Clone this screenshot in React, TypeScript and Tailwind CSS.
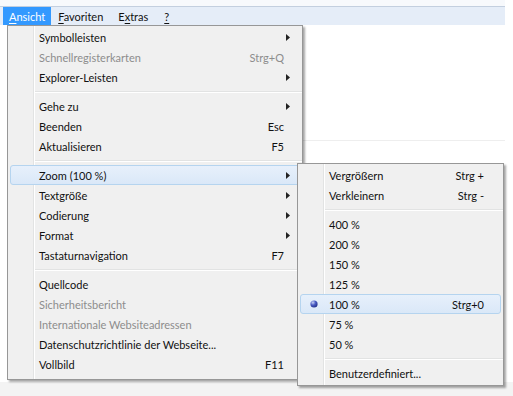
import React from "react";

type Item =
  | { sep: true }
  | {
      sep?: false;
      label: React.ReactNode;
      shortcut?: string;
      arrow?: boolean;
      disabled?: boolean;
      hl?: boolean;
      radio?: boolean;
    };

const mainItems: Item[] = [
  { label: "Symbolleisten", arrow: true },
  { label: "Schnellregisterkarten", shortcut: "Strg+Q", disabled: true },
  { label: "Explorer-Leisten", arrow: true },
  { sep: true },
  { label: "Gehe zu", arrow: true },
  { label: "Beenden", shortcut: "Esc" },
  { label: "Aktualisieren", shortcut: "F5" },
  { sep: true },
  { label: "Zoom (100 %)", arrow: true, hl: true },
  { label: "Textgröße", arrow: true },
  { label: "Codierung", arrow: true },
  { label: "Format", arrow: true },
  { label: "Tastaturnavigation", shortcut: "F7" },
  { sep: true },
  { label: "Quellcode" },
  { label: "Sicherheitsbericht", disabled: true },
  { label: "Internationale Websiteadressen", disabled: true },
  { label: "Datenschutzrichtlinie der Webseite..." },
  { label: "Vollbild", shortcut: "F11" },
];

const subItems: Item[] = [
  { label: "Vergrößern", shortcut: "Strg +" },
  { label: "Verkleinern", shortcut: "Strg -" },
  { sep: true },
  { label: "400 %" },
  { label: "200 %" },
  { label: "150 %" },
  { label: "125 %" },
  { label: "100 %", shortcut: "Strg+0", radio: true, hl: true },
  { label: "75 %" },
  { label: "50 %" },
  { sep: true },
  { label: "Benutzerdefiniert..." },
];

function Arrow() {
  return (
    <svg width="4" height="7" viewBox="0 0 4 7" className="block">
      <path d="M0 0 L4 3.5 L0 7 Z" fill="#222" />
    </svg>
  );
}

function Bullet() {
  return (
    <svg width="8" height="8" viewBox="0 0 8 8" className="block">
      <defs>
        <radialGradient id="rb" cx="0.35" cy="0.3" r="0.8">
          <stop offset="0" stopColor="#c9d3f5" />
          <stop offset="0.45" stopColor="#4a5cc4" />
          <stop offset="1" stopColor="#1e2a80" />
        </radialGradient>
      </defs>
      <circle cx="4" cy="4" r="3.6" fill="url(#rb)" />
    </svg>
  );
}

function Menu({
  items,
  textLeft,
  gutter,
  rightPad,
}: {
  items: Item[];
  textLeft: number;
  gutter: number;
  rightPad: number;
}) {
  return (
    <div className="relative h-full border border-[#979797] bg-[#f0f0f0] pt-px pb-[3px] shadow-[2px_2px_2px_rgba(0,0,0,0.35)]">
      <div
        className="pointer-events-none absolute top-0 bottom-0 w-[2px] border-l border-[#e2e3e3] bg-transparent"
        style={{ left: gutter }}
      >
        <div className="h-full w-px bg-white" />
      </div>
      {items.map((it, i) =>
        it.sep ? (
          <div key={i} className="flex h-[9px] items-center" style={{ paddingLeft: gutter + 2 }}>
            <div className="w-full">
              <div className="h-px bg-[#e2e3e3]" />
              <div className="h-px bg-white" />
            </div>
          </div>
        ) : (
          <div
            key={i}
            className={
              "relative mx-[2px] flex h-[20px] items-center rounded-[3px] border " +
              (it.hl
                ? "border-[#b5d4ef] bg-[linear-gradient(#e7f0fb,#dae8f8)]"
                : "border-transparent")
            }
          >
            {it.radio && (
              <div className="absolute left-[9px] top-[5px]">
                <Bullet />
              </div>
            )}
            <span
              className={"whitespace-nowrap " + (it.disabled ? "text-[#8d8d8d]" : "text-[#111]")}
              style={{ paddingLeft: textLeft - 3 }}
            >
              {it.label}
            </span>
            <span className="flex-1" />
            {it.shortcut && (
              <span
                className={"whitespace-nowrap " + (it.disabled ? "text-[#8d8d8d]" : "text-[#111]")}
                style={{ paddingRight: rightPad - 3 }}
              >
                {it.shortcut}
              </span>
            )}
            {it.arrow && (
              <span className="pr-[9px]">
                <Arrow />
              </span>
            )}
          </div>
        )
      )}
    </div>
  );
}

export default function App() {
  return (
    <div
      className="relative h-[396px] w-[513px] overflow-hidden bg-white text-[11px] leading-none"
      style={{ fontFamily: 'Lato, "Noto Sans", sans-serif' }}
    >
      <div className="h-[6px] w-[505px] bg-[#f7f9fc]" />
      <div className="flex h-[19px] w-[505px] items-stretch border-t border-[#c3cfdf] bg-[#e5edf8] pl-[3px] text-[#111]">
        <div className="flex items-center bg-[#3399ff] px-[6px] text-white">
          <span>
            <span className="underline underline-offset-2">A</span>nsicht
          </span>
        </div>
        <div className="flex items-center px-[7px]">
          <span>
            <span className="underline underline-offset-2">F</span>avoriten
          </span>
        </div>
        <div className="flex items-center px-[8px]">
          <span>
            E<span className="underline underline-offset-2">x</span>tras
          </span>
        </div>
        <div className="flex items-center px-[8px]">
          <span className="underline underline-offset-2">?</span>
        </div>
      </div>

      <div className="absolute left-[302px] top-[140px] h-px w-[203px] bg-[#eeeeee]" />
      <div className="absolute bottom-0 left-0 h-[14px] w-full bg-[#f3f3f3]" />

      <div className="absolute left-[7px] top-[25px] h-[355px] w-[296px]">
        <Menu items={mainItems} textLeft={31} gutter={25} rightPad={18} />
      </div>

      <div className="absolute left-[297px] top-[163px] h-[223px] w-[207px]">
        <Menu items={subItems} textLeft={31} gutter={25} rightPad={19} />
      </div>
    </div>
  );
}
